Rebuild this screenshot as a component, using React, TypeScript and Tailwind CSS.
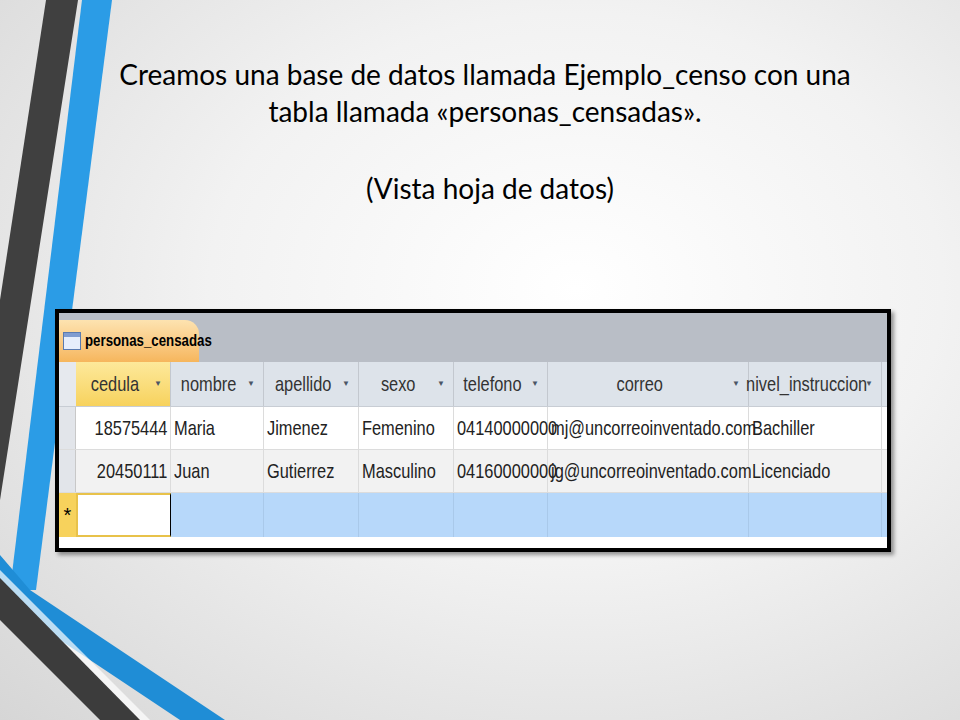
const cols = [
  { name: 'cedula', w: 95 },
  { name: 'nombre', w: 93 },
  { name: 'apellido', w: 95 },
  { name: 'sexo', w: 95 },
  { name: 'telefono', w: 94 },
  { name: 'correo', w: 201 },
  { name: 'nivel_instruccion', w: 133 },
];

const rows = [
  ['18575444', 'Maria', 'Jimenez', 'Femenino', '04140000000', 'mj@uncorreoinventado.com', 'Bachiller'],
  ['20450111', 'Juan', 'Gutierrez', 'Masculino', '04160000000', 'jg@uncorreoinventado.com', 'Licenciado'],
];

const sans = { fontFamily: '"Liberation Sans", Arial, sans-serif' };

function Narrow({ children, origin = 'origin-left' }: { children: React.ReactNode; origin?: string }) {
  return <span className={`inline-block whitespace-nowrap scale-x-[0.78] ${origin}`}>{children}</span>;
}

function Arrow() {
  return <span className="text-[8px] text-gray-600 mr-2">▼</span>;
}

export default function App() {
  return (
    <div className="relative w-[960px] h-[720px] overflow-hidden bg-[radial-gradient(ellipse_at_60%_40%,#ffffff_0%,#f2f2f2_45%,#d6d6d6_100%)]">
      <svg className="absolute inset-0" width="960" height="720">
        <polygon points="46,0 78,0 0,500 0,300" fill="#404040" />
        <polygon points="82,0 112,0 36,590 10,590" fill="#2b9ce6" />
        <polygon points="0,555 30,590 225,720 180,720 0,600" fill="#1f8dd6" />
        <polygon points="0,570 150,720 115,720 0,610" fill="#ffffff" opacity="0.7" />
        <polygon points="0,578 140,720 100,720 0,620" fill="#3c3c3c" />
      </svg>

      <div className="relative pt-[56px] pl-[10px] text-center text-black text-[28px] leading-[37px]" style={{ fontFamily: 'Lato, "Open Sans", sans-serif' }}>
        <p>Creamos una base de datos llamada Ejemplo_censo con una</p>
        <p>tabla llamada «personas_censadas».</p>
        <p className="mt-[40px] pl-[10px]">(Vista hoja de datos)</p>
      </div>

      <div className="absolute left-[55px] top-[309px] w-[836px] h-[243px] border-[4px] border-black bg-white shadow-[3px_3px_4px_rgba(0,0,0,0.4)] overflow-hidden" style={sans}>
        <div className="h-[49px] bg-[#b9bec6] flex items-end">
          <div className="h-[42px] w-[140px] rounded-tr-[14px] bg-gradient-to-b from-[#fde3b0] to-[#f6b65c] flex items-center gap-1 pl-1 text-[17px] font-bold text-black">
            <span className="shrink-0 w-[18px] h-[18px] border border-[#5a7bb0] bg-[linear-gradient(#7f9cd0_0_25%,#e6eefb_25%)]" />
            <Narrow>personas_censadas</Narrow>
          </div>
        </div>
        <div className="flex h-[45px] bg-[#dde3ea] border-b border-[#c8cdd4] text-[21px] text-[#333]">
          <div className="w-[17px] bg-[#e6e9ee]" />
          {cols.map((c, i) => (
            <div key={c.name} style={{ width: c.w }} className={`flex items-center border-r border-[#c3c8cf] ${i === 0 ? 'bg-gradient-to-b from-[#fde99a] to-[#f7d25c]' : ''}`}>
              <span className="flex-1 flex justify-center min-w-0"><Narrow origin="origin-center">{c.name}</Narrow></span>
              <Arrow />
            </div>
          ))}
          <div className="flex-1" />
        </div>
        {rows.map((r, ri) => (
          <div key={ri} className={`flex h-[43px] text-[21px] text-[#222] border-b border-[#dcdcdc] ${ri === 1 ? 'bg-[#f2f2f2]' : 'bg-white'}`}>
            <div className="w-[17px] bg-[#e2e5ea] border-r border-[#c8c8c8]" />
            {r.map((v, i) => (
              <div key={i} style={{ width: cols[i].w }} className={`flex items-center px-[3px] border-r border-[#dcdcdc] ${i === 0 ? 'justify-end' : ''}`}>
                <Narrow origin={i === 0 ? 'origin-right' : 'origin-left'}>{v}</Narrow>
              </div>
            ))}
            <div className="flex-1" />
          </div>
        ))}
        <div className="flex h-[44px] bg-[#b7d8fa]">
          <div className="w-[17px] bg-[#f7d25c] flex items-center justify-center text-[20px] text-black">*</div>
          {cols.map((c, i) => (
            <div key={c.name} style={{ width: c.w }} className={`border-r border-[#a9c9ea] ${i === 0 ? 'bg-white border-2 border-[#e8c24a] border-r-black' : ''}`} />
          ))}
          <div className="flex-1" />
        </div>
      </div>
    </div>
  );
}
